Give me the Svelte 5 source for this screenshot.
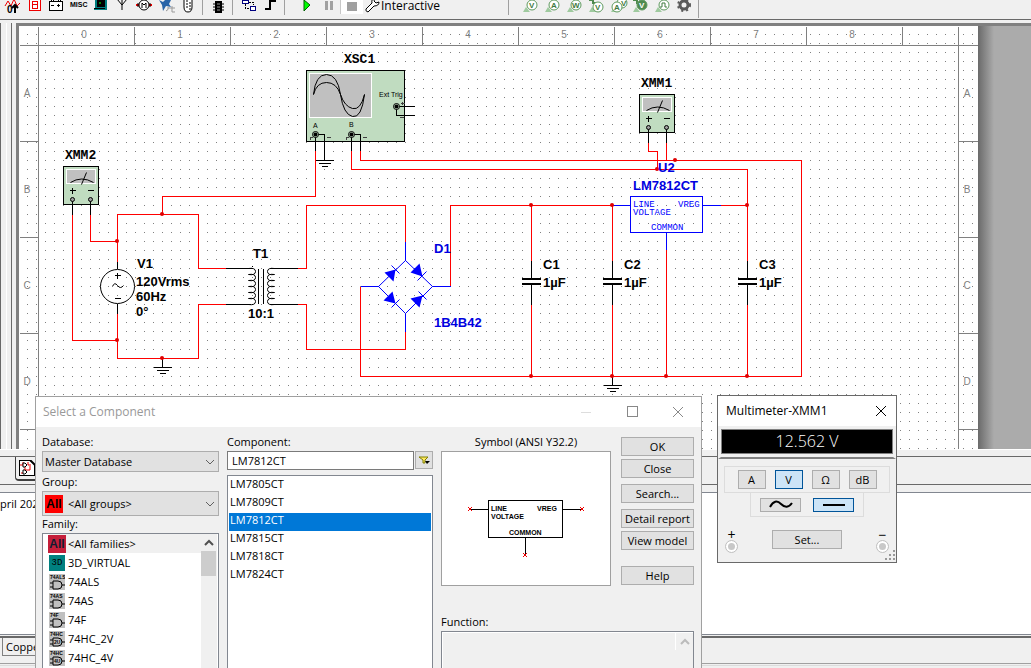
<script>
  /* Sheet data, in sheet coordinates */
  const columns = [0, 1, 2, 3, 4, 5, 6, 7, 8];
  const rows = ['A', 'B', 'C', 'D'];

  const redWires = [
    'M72 214V340H117', 'M90 214V241H117', 'M117 261V214H198V268H225',
    'M162 214V196H315V150', 'M117 313V358H198V304H225',
    'M297 268H306V205H405V241', 'M297 304H306V349H405V331',
    'M360 286V376H801V160H360V150', 'M450 286V205H612',
    'M351 150V169H747V260', 'M720 205H747', 'M666 249V376',
    'M648 142V151H657V169', 'M666 142V160',
    'M531 205V260M531 304V376', 'M612 205V260M612 304V376', 'M747 304V376'
  ];
  const junctions = [
    [117, 241], [162, 214], [117, 340], [162, 358], [531, 205], [612, 205], [747, 205],
    [531, 376], [612, 376], [666, 376], [747, 376], [675, 160], [657, 169]
  ];
  const grounds = [[162, 358, 9], [324, 151, 9], [612, 376, 9]];
  const capacitors = [
    { name: 'C1', x: 531 },
    { name: 'C2', x: 612 },
    { name: 'C3', x: 747 }
  ];
  const meters = [
    { name: 'XMM2', x: 63, y: 166 },
    { name: 'XMM1', x: 639, y: 94 }
  ];
  const coilSteps = [0, 1, 2, 3, 4, 5];

  const families = [
    { name: '<All families>', kind: 'all' },
    { name: '3D_VIRTUAL', kind: 'virtual' },
    { name: '74ALS', kind: 'gate', tag: '74ALS' },
    { name: '74AS', kind: 'gate', tag: '74AS' },
    { name: '74F', kind: 'gate', tag: '74F' },
    { name: '74HC_2V', kind: 'gate', tag: '74HC', volts: '2U' },
    { name: '74HC_4V', kind: 'gate', tag: '74HC', volts: '4U' }
  ];
  const components = ['LM7805CT', 'LM7809CT', 'LM7812CT', 'LM7815CT', 'LM7818CT', 'LM7824CT'];
  const modes = ['A', 'V', 'Ω', 'dB'];
  const probes = ['V', 'A', 'W', 'dV', 'AV', 'ref', 'digital'];

  let selected = $state('LM7812CT');
  let mode = $state('V');
  let coupling = $state('dc');
</script>

<main>
  <nav class="toolbar" aria-label="Components">
    <button aria-label="Source"><svg width="22" height="18" viewBox="0 0 22 18"><path d="M4 6l3-5 3 5 3-7 3 7 3-3" fill="none" stroke="#e00" /><text x="6" y="13" class="mini">0</text><path d="M14 5v8M11 8l3-3 3 3" stroke="#000" fill="none" stroke-width="2" /></svg></button>
    <button aria-label="Indicator"><svg width="22" height="18" viewBox="0 0 22 18" shape-rendering="crispEdges"><rect x="6" y="-4" width="11" height="14" fill="#fff" stroke="#e00" /><path d="M9 1h5v3H9zM9 4h5v4H9z" fill="none" stroke="#e00" /></svg></button>
    <button aria-label="Power"><svg width="22" height="18" viewBox="0 0 22 18" shape-rendering="crispEdges"><path d="M4 1h13v9H4zM6 1v-2h2v2M13 1v-2h2v2M6 5h3M12 5h3M13 4v3" fill="#fff" stroke="#000" /></svg></button>
    <button aria-label="Miscellaneous"><svg width="22" height="18" viewBox="0 0 22 18"><text x="3" y="7" class="misc">MISC</text></svg></button>
    <button aria-label="Advanced peripherals"><svg width="22" height="18" viewBox="0 0 22 18"><path d="M6 0h12v10H5V8h1z" fill="#008080" /><path d="M8 0h8v7H8zM5 8h11v1H5z" /><path d="M10 3h2" stroke="#0f0" /></svg></button>
    <button aria-label="RF"><svg width="22" height="18" viewBox="0 0 22 18"><path d="M6-1l5 6 5-6M11-1v11" fill="none" stroke="#000" /></svg></button>
    <button aria-label="Electromechanical"><svg width="22" height="18" viewBox="0 0 22 18"><path d="M3 5h16" stroke="#e00" stroke-width="2" /><circle cx="11" cy="5" r="5" fill="#fff" stroke="#000" /><path d="M9 8V3l2 2 2-2v5M5 3v4M17 3v4" fill="none" stroke="#000" /></svg></button>
    <button aria-label="NI components"><svg width="22" height="18" viewBox="0 0 22 18"><path d="M4 0l4 2 3-3 5 1-2 4 2 3-5-1-3 5-1-6z" fill="#2864a8" /><path d="M11 11q3-1 2-4M13 8h2M17 6v6h3M15 8h5" fill="none" stroke="#999" /></svg></button>
    <button aria-label="Connectors"><svg width="22" height="18" viewBox="0 0 22 18"><path d="M7-1h8v8q0 5-4 5t-4-5z" fill="#fff" stroke="#000" /><path d="M10 0v8M13 2v8" stroke="#000" stroke-dasharray="2 1" /></svg></button>
    <span class="sep"></span>
    <button aria-label="MCU"><svg width="22" height="18" viewBox="0 0 22 18"><path d="M8 1h7v12H8z" /><path d="M6 4h11M6 7h11M6 10h11" stroke="#000" /><path d="M10 4h3M10 7h3M10 10h3" stroke="#999" /></svg></button>
    <span class="sep"></span>
    <button aria-label="Hierarchical block"><svg width="22" height="18" viewBox="0 0 22 18" shape-rendering="crispEdges"><path d="M5 0h6v3H5zM13 6h5v4h-5z" fill="#fff" stroke="#000080" /><path d="M8 4v4h4M12 2h4v3" fill="none" stroke="#000" stroke-dasharray="2 1" /></svg></button>
    <button aria-label="Bus"><svg width="22" height="18" viewBox="0 0 22 18"><path d="M6 9h5V1h6" fill="none" stroke="#000" stroke-width="2" /></svg></button>
    <span class="sep"></span>
    <div class="run">
      <button aria-label="Run"><svg width="22" height="18" viewBox="0 0 22 18"><path d="M8 0l6 5-6 6z" fill="#0f0" stroke="#006000" /></svg></button>
      <button aria-label="Pause"><svg width="22" height="18" viewBox="0 0 22 18"><path d="M7 1h3v9H7zM12 1h3v9h-3z" fill="#a0a0a0" /></svg></button>
      <button class="pressed" aria-label="Stop"><svg width="22" height="18" viewBox="0 0 22 18"><path d="M6 2h10v9H6z" fill="#a0a0a0" /></svg></button>
      <button class="analysis"><svg width="18" height="18" viewBox="0 0 18 18"><path d="M3 9l6-6q-1-4 3-5l-1 3 2 2 3-1q0 4-5 4l-6 6q-3-1-2-3z" fill="#fff" stroke="#000" /></svg>Interactive</button>
    </div>
    <span class="sep"></span>
    <div class="probes">
      {#each probes as probe}
        <button aria-label="{probe} probe"><svg width="22" height="18" viewBox="0 0 22 18">
          <path d="M3 12l3-5 4 5z" fill="#9fca9f" />
          {#if probe === 'dV' || probe === 'ref'}<path d="M3 0h4v4M7 3h4" fill="none" stroke="#4f8a4f" stroke-width="2" />{/if}
          {#if probe === 'AV'}<circle cx="14" cy="3" r="5" fill="#fff" stroke="#5f9a5f" /><text x="13" y="6" class="probe">V</text>{/if}
          <circle cx={probe === 'AV' ? 9 : 12} cy={probe === 'AV' || probe === 'dV' ? 7 : 5} r="5" fill={probe === 'ref' ? '#4f8a4f' : '#fff'} stroke="#5f9a5f" />
          {#if probe === 'digital'}<path d="M8 7h2V3h3v4h2" fill="none" stroke="#3f7a3f" />
          {:else if probe === 'AV'}<text x="6" y="10" class="probe">A</text>
          {:else if probe === 'dV'}<text x="9" y="10" class="probe">V</text>
          {:else if probe === 'ref'}<text x="9" y="8" class="probe light">V</text>
          {:else}<text x={probe === 'W' ? 8 : 9} y="8" class="probe">{probe}</text>{/if}
        </svg></button>
      {/each}
      <button aria-label="Probe settings"><svg width="22" height="18" viewBox="0 0 22 18"><circle cx="10" cy="5" r="4" fill="none" stroke="#5a5a5a" stroke-width="3" /><circle cx="10" cy="5" r="6" fill="none" stroke="#5a5a5a" stroke-width="2" stroke-dasharray="2 3" /></svg></button>
    </div>
  </nav>

  <section class="workspace">
    <div class="dock"><i class="edge"></i></div>
    <div class="sheet">
      <svg class="schematic" width="959" height="423" viewBox="19 26 959 423">
        <defs>
          <pattern id="dots" x="27" y="34" width="9" height="9" patternUnits="userSpaceOnUse">
            <rect width="1" height="1" fill="#808080" />
          </pattern>
        </defs>
        <rect x="19" y="26" width="959" height="423" fill="#fff" />
        <rect x="19" y="26" width="959" height="423" fill="url(#dots)" />

        <g transform="translate(.5 .5)" fill="none" stroke="#808080" shape-rendering="crispEdges">
          <path d="M19 45H978M38 26V449M958 26V449" />
          {#each columns as column}<path d="M{134 + column * 96} 26V45" />{/each}
          {#each rows as row, i}<path d="M19 {141 + i * 96}H38M958 {141 + i * 96}H978" />{/each}
        </g>
        {#each columns as column}<text class="ruler" x={84 + column * 96} y="38">{column}</text>{/each}
        {#each rows as row, i}
          <text class="ruler" x="27" y={97 + i * 96}>{row}</text>
          <text class="ruler" x="967" y={97 + i * 96}>{row}</text>
        {/each}

        <!-- instruments -->
        <g transform="translate(.5 .5)">
          {#each meters as meter}
            <g transform="translate({meter.x} {meter.y})">
              <g shape-rendering="crispEdges">
                <rect width="35" height="38" fill="#c0dcc0" stroke="#000" />
                <rect x="3" y="3" width="29" height="14" fill="#c0c0c0" stroke="#fff" />
                <path d="M9 21V27M6 24H12M24 24H30M9 33V48M27 33V48" stroke="#000" />
              </g>
              <path d="M7 16Q18 9 30 16M18 18L23 6" fill="none" stroke="#000" />
              <circle cx="9" cy="33" r="2" fill="#a0a0a0" stroke="#000" />
              <circle cx="27" cy="33" r="2" fill="#a0a0a0" stroke="#000" />
            </g>
          {/each}

          <g shape-rendering="crispEdges">
            <rect x="306" y="70" width="98" height="71" fill="#c0dcc0" stroke="#000" />
            <rect x="309" y="73" width="62" height="44" fill="#c0c0c0" stroke="#fff" />
            <path d="M315 150V134H324V151M351 150V134H360V150M414 106H396V115H414" fill="none" stroke="#000" />
            <path d="M309 137H312M310 136V139M326 137H330M345 137H348M346 136V139M362 137H366M400 103H404M402 101V104M399 117H403" stroke="#404040" />
          </g>
          <path d="M313 94Q315 74 326 74T340 94T352 116T364 94" fill="none" stroke="#000" />
          <path d="M313 94Q316 82 326 82T340 94T352 108T364 94" fill="none" stroke="#000" />
          {#each [[315, 134], [351, 134], [396, 106]] as [x, y]}
            <circle cx={x} cy={y} r="3" fill="#c0dcc0" stroke="#000" />
            <circle cx={x} cy={y} r="2" />
          {/each}
        </g>
        <text class="port" x="379" y="97">Ext Trig</text>
        <text class="port" x="313" y="128">A</text>
        <text class="port" x="349" y="127">B</text>

        <!-- wiring -->
        <g transform="translate(.5 .5)" fill="none" shape-rendering="crispEdges">
          {#each redWires as wire}<path d={wire} stroke="#f00" />{/each}
          {#each grounds as [x, y, drop]}
            <path d="M{x} {y}V{y + drop}M{x - 9} {y + drop}H{x + 9}M{x - 6} {y + drop + 3}H{x + 6}M{x - 3} {y + drop + 6}H{x + 3}" stroke="#000" />
          {/each}
          <path d="M117 261V268M117 303V313M225 268H252M225 304H250M270 268H297M270 304H297M258 268V303M263 268V303M252 265V266" stroke="#000" />
          <path d="M114 275H120M117 272V278M114 298H120" stroke="#000" />
          <path d="M405 241V260M405 313V331M360 286H378M432 286H450M612 205H630M702 205H720M666 232V249" stroke="#00f" />
          <rect x="630" y="196" width="72" height="36" stroke="#00f" />
        </g>
        <g transform="translate(.5 .5)" fill="none">
          <circle cx="117" cy="286" r="17" stroke="#000" />
          <path d="M112 286Q114 281 117 285T123 285" stroke="#000" />
          {#each coilSteps as step}
            <path d="M248 {268 + step * 6}Q255 {267 + step * 6} 255 {271 + step * 6}T248 {274 + step * 6}" stroke="#000" />
            <path d="M274 {268 + step * 6}Q267 {267 + step * 6} 267 {271 + step * 6}T274 {274 + step * 6}" stroke="#000" />
          {/each}
          <path d="M405 260L432 286L405 313L378 286Z" stroke="#00f" />
          <path d="M384 272L393 281L395 269ZM410 272L419 263L422 276ZM383 300L392 291L395 303ZM410 298L419 307L422 295Z" fill="#00f" />
          <path d="M391 265L399 273M417 280L426 271M391 307L399 299M418 291L426 299" stroke="#00f" />
          {#each capacitors as cap}
            <path d="M{cap.x} 260V278M{cap.x} 284V304" stroke="#000" shape-rendering="crispEdges" />
          {/each}
        </g>
        {#each capacitors as cap}
          <rect x={cap.x - 9} y="278" width="19" height="2" />
          <rect x={cap.x - 9} y="283" width="19" height="2" />
          <text class="label" x={cap.x + 12} y="269">{cap.name}</text>
          <text class="label" x={cap.x + 12} y="287">1µF</text>
        {/each}
        <g fill="#e00000">
          {#each junctions as [x, y]}<circle cx={x} cy={y} r="2" />{/each}
        </g>

        <!-- labels -->
        <text class="tag" x="65" y="159">XMM2</text>
        <text class="tag" x="641" y="87">XMM1</text>
        <text class="tag" x="344" y="63">XSC1</text>
        <text class="label" x="137" y="268">V1</text>
        <text class="label" x="136" y="286">120Vrms</text>
        <text class="label" x="136" y="301">60Hz</text>
        <text class="label" x="136" y="316">0°</text>
        <text class="label" x="253" y="258">T1</text>
        <text class="label" x="248" y="318">10:1</text>
        <text class="label blue" x="434" y="253">D1</text>
        <text class="label blue" x="434" y="327">1B4B42</text>
        <text class="label blue" x="658" y="172">U2</text>
        <text class="label blue" x="633" y="190">LM7812CT</text>
        <text class="pin" x="633" y="207">LINE</text>
        <text class="pin" x="678" y="207">VREG</text>
        <text class="pin" x="633" y="215">VOLTAGE</text>
        <text class="pin" x="651" y="230">COMMON</text>
      </svg>
    </div>
    <div class="backdrop"></div>
  </section>

  <div class="tabs">
    <button class="doc-tab" aria-label="Design1"><svg width="16" height="16" viewBox="0 0 16 16"><path d="M0 0h11l5 5v11H0z" fill="#fff" stroke="#000" stroke-width="2" /><path d="M1 5h3V2M9 2v3h3M2 13h4V6M6 10h5V6" fill="none" stroke="#e00" /><path d="M4 3h2l2 2-2 2H4zM4 10h2l2 2-2 2H4z" fill="#fff" stroke="#000" /></svg></button>
  </div>
  <section class="results"><p>pril 2020</p></section>
  <div class="sheet-tabs"><button>Copper layers</button></div>
  <footer></footer>

  <section class="window picker" aria-label="Select a Component">
    <header>
      <h1>Select a Component</h1>
      <button aria-label="Minimize"><svg width="12" height="12"><path d="M1 6h10" stroke="#ddd" shape-rendering="crispEdges" /></svg></button>
      <button aria-label="Maximize"><svg width="12" height="12"><rect x="1" y="1" width="10" height="10" transform="translate(.5 -.5)" fill="none" stroke="#888" /></svg></button>
      <button aria-label="Close window"><svg width="12" height="12"><path d="M1 1l10 10M11 1L1 11" stroke="#888" /></svg></button>
    </header>
    <div class="picker-body">
      <div class="col">
        <label for="database">Database:</label>
        <div class="combo">
          <select id="database"><option>Master Database</option></select>
          <svg class="chevron" width="10" height="6"><path d="M1 1l4 4 4-4" /></svg>
        </div>
        <label for="group">Group:</label>
        <div class="combo tall">
          <select id="group"><option>&lt;All groups&gt;</option></select>
          <span class="all-icon">All</span>
          <svg class="chevron" width="10" height="6"><path d="M1 1l4 4 4-4" /></svg>
        </div>
        <span class="caption" id="family">Family:</span>
        <div class="families">
          <ul role="listbox" aria-labelledby="family">
            {#each families as family, i}
              <li role="option" aria-selected={i === 0} class:current={i === 0}>
                {#if family.kind === 'all'}
                  <span class="all-icon dim">All</span>
                {:else if family.kind === 'virtual'}
                  <span class="virtual-icon">3D</span>
                {:else}
                  <svg width="16" height="16" viewBox="0 0 16 16">
                    <rect width="16" height="16" fill="#c0c0c0" />
                    <text x="1" y="5" class="chip">{family.tag}</text>
                    <path d="M4 7h5q4 0 4 4t-4 4H4zM1 9h3M1 13h3M13 11h3" fill="none" stroke="#000" />
                    {#if family.volts}<text x="5" y="13" class="chip">{family.volts}</text>{/if}
                  </svg>
                {/if}
                {family.name}
              </li>
            {/each}
          </ul>
          <div class="scroll">
            <svg width="16" height="17"><path d="M4 11l4-4 4 4" fill="none" stroke="#505050" stroke-width="2" /></svg>
            <i></i>
          </div>
        </div>
      </div>

      <div class="col">
        <label for="component">Component:</label>
        <div class="search">
          <input id="component" type="text" bind:value={selected} />
          <button aria-label="Filter"><svg width="12" height="10"><path d="M1 2h9L7 5v3H5V5z" fill="#ffe860" stroke="#808000" /><path d="M7 6h5L9 9z" /></svg></button>
        </div>
        <ul class="components" role="listbox" aria-label="Component">
          {#each components as component}
            <li role="option" aria-selected={component === selected} class:selected={component === selected}>
              <button onclick={() => (selected = component)}>{component}</button>
            </li>
          {/each}
        </ul>
      </div>

      <div class="detail">
        <div class="col">
          <span class="caption centered">Symbol (ANSI Y32.2)</span>
          <div class="preview">
            <svg width="116" height="60" viewBox="0 0 116 60">
              <g transform="translate(.5 .5)" fill="none" stroke="#000" shape-rendering="crispEdges">
                <rect x="20" y="1" width="74" height="37" />
                <path d="M2 10H20M94 10H113M57 38V56" />
              </g>
              <path d="M0 8l4 4M4 8l-4 4M112 8l4 4M116 8l-4 4M55 54l4 4M59 54l-4 4" stroke="#e00" />
              <text x="23" y="12">LINE</text>
              <text x="69" y="12">VREG</text>
              <text x="23" y="20">VOLTAGE</text>
              <text x="41" y="36">COMMON</text>
            </svg>
          </div>
        </div>
        <div class="actions">
          <button>OK</button>
          <button>Close</button>
          <button class="spaced">Search...</button>
          <button class="spaced">Detail report</button>
          <button>View model</button>
          <button class="apart">Help</button>
        </div>
        <div class="col function">
          <span class="caption">Function:</span>
          <div class="function-box">
            <svg width="17" height="18"><path d="M5 12l4-4 4 4" fill="none" stroke="#bbb" stroke-width="2" /></svg>
          </div>
        </div>
      </div>
    </div>
  </section>

  <section class="window meter" aria-label="Multimeter-XMM1">
    <header>
      <h1>Multimeter-XMM1</h1>
      <button aria-label="Close multimeter"><svg width="12" height="12"><path d="M1 1l10 10M11 1L1 11" stroke="#000" /></svg></button>
    </header>
    <div class="readout"><output>12.562 V</output></div>
    <div class="modes">
      {#each modes as item}
        <button class:on={mode === item} onclick={() => (mode = item)}>{item}</button>
      {/each}
    </div>
    <div class="coupling">
      <button class:on={coupling === 'ac'} aria-label="AC" onclick={() => (coupling = 'ac')}><svg width="24" height="10"><path d="M1 7Q6-2 12 4T23 3" fill="none" stroke="#000" stroke-width="2" /></svg></button>
      <button class:on={coupling === 'dc'} aria-label="DC" onclick={() => (coupling = 'dc')}><svg width="24" height="10"><path d="M1 4h22v2H1z" /></svg></button>
    </div>
    <div class="terminals">
      <span class="terminal">+<i></i></span>
      <button>Set...</button>
      <span class="terminal">−<i></i></span>
    </div>
    <svg class="grip" width="12" height="12"><path d="M9 1h2M5 5h2M9 5h2M1 9h2M5 9h2M9 9h2" stroke="#999" stroke-width="2" /></svg>
  </section>
</main>

<style>
  :global(body) {
    margin: 0;
  }
  main {
    position: relative;
    display: flex;
    flex-direction: column;
    height: 100vh;
    overflow: hidden;
    background: #f0f0f0;
    color: #000;
    font: 11px/14px "Open Sans", "Noto Sans", sans-serif;
  }
  button, input, select {
    box-sizing: border-box;
    margin: 0;
    padding: 0;
    font: inherit;
    color: inherit;
  }
  svg {
    display: block;
    flex: none;
  }
  ul, h1, p {
    margin: 0;
    padding: 0;
    list-style: none;
    font-weight: normal;
  }

  .toolbar {
    display: flex;
    flex: none;
    height: 19px;
    overflow: hidden;
    border-bottom: 1px solid #696969;
    padding-left: 1px;
  }
  .toolbar button {
    display: flex;
    border: 0;
    background: none;
  }
  .toolbar .sep {
    width: 1px;
    height: 15px;
    margin: 0 4px 0 3px;
    background: #a0a0a0;
  }
  .run {
    display: flex;
    box-sizing: border-box;
    width: 216px;
    padding-left: 7px;
  }
  .run .pressed {
    height: 14px;
    background: #fff;
    border-left: 1px solid #c8c8c8;
  }
  .run .analysis {
    font-size: 12px;
    line-height: 12px;
  }
  .probes {
    display: flex;
    height: 18px;
    padding: 0 2px 0 7px;
    border-right: 1px solid #a0a0a0;
  }
  .mini {
    font: bold 10px "Liberation Sans", sans-serif;
  }
  .misc {
    font: bold 7px "Liberation Sans", sans-serif;
  }
  .probe {
    font: bold 8px "Liberation Sans", sans-serif;
    fill: #3f7a3f;
  }
  .probe.light {
    fill: #fff;
  }

  .workspace {
    display: flex;
    flex: none;
    margin-top: 3px;
    border-bottom: 1px solid #fff;
  }
  .dock {
    flex: none;
    box-sizing: border-box;
    width: 12px;
    margin-right: 4px;
    border-left: 1px solid #696969;
    border-right: 1px solid #696969;
  }
  .edge {
    display: block;
    width: 1px;
    height: 100%;
    margin-left: 5px;
    background: #fff;
  }
  .sheet {
    flex: none;
    border: solid #808080;
    border-width: 3px 0 0 3px;
  }
  .backdrop {
    flex: 1;
    border-top: 3px solid #808080;
    background: linear-gradient(90deg, #6a6a6a, #ababab 16px);
  }
  .schematic text {
    font-family: "Liberation Sans", Arial, sans-serif;
  }
  .schematic .ruler {
    font-size: 10px;
    fill: #808080;
    text-anchor: middle;
  }
  .schematic .label {
    font-size: 13px;
    font-weight: bold;
  }
  .schematic .blue {
    fill: #0000e0;
  }
  .schematic .tag {
    font: bold 13px "Liberation Mono", monospace;
  }
  .schematic .pin {
    font: 9px "Liberation Mono", monospace;
    fill: #00f;
  }
  .schematic .port {
    font-size: 7px;
  }

  .tabs {
    flex: none;
    box-sizing: border-box;
    height: 29px;
    margin-top: 6px;
    border: solid #696969;
    border-width: 1px 0;
    padding-left: 15px;
  }
  .doc-tab {
    width: 110px;
    height: 24px;
    border: solid #404040;
    border-width: 0 1px 2px;
    border-radius: 0 0 4px 4px;
    background: #f0f0f0;
    padding-left: 3px;
  }
  .results {
    flex: 1;
    margin-top: 7px;
    padding-top: 4px;
    border: solid #828790;
    border-width: 1px 0;
    background: #fff;
  }
  .sheet-tabs {
    flex: none;
    height: 28px;
    box-sizing: border-box;
    margin-top: 1px;
    border-top: 2px solid #696969;
    border-bottom: 1px solid #a0a0a0;
    padding-left: 2px;
  }
  .sheet-tabs button {
    height: 18px;
    border: solid #808080;
    border-width: 0 1px 1px;
    background: #f0f0f0;
    padding: 0 3px;
  }
  footer {
    flex: none;
    height: 2px;
    margin-top: 1px;
    border-top: 1px solid #dcdcdc;
  }

  /* windows */
  .window {
    position: absolute;
    box-sizing: border-box;
    background: #f0f0f0;
  }
  .window header {
    display: flex;
    align-items: center;
    height: 30px;
    background: #fff;
  }
  .window h1 {
    flex: 1;
    font-size: 12px;
    line-height: 16px;
  }
  .window header button {
    border: 0;
    background: none;
  }
  .picker {
    left: 35px;
    top: 396px;
    bottom: 0;
    width: 667px;
    display: flex;
    flex-direction: column;
    border: 1px solid #a0a0a0;
    border-bottom: 0;
  }
  .picker header {
    flex: none;
    gap: 34px;
    padding: 0 17px 0 7px;
    color: #999;
  }
  .picker-body {
    flex: 1;
    min-height: 0;
    display: grid;
    grid-template-columns: 177px 206px 1fr;
    column-gap: 8px;
    padding: 7px 7px 0 6px;
  }
  .col {
    display: flex;
    flex-direction: column;
    min-height: 0;
  }
  label, .caption {
    flex: none;
    height: 17px;
    line-height: 16px;
  }
  .centered {
    text-align: center;
  }
  .combo {
    position: relative;
    height: 21px;
    margin-bottom: 2px;
  }
  .combo.tall {
    height: 25px;
    margin-bottom: 0;
  }
  .combo select {
    width: 100%;
    height: 100%;
    appearance: none;
    border: 1px solid #adadad;
    border-radius: 0;
    background: #e1e1e1;
    padding-left: 2px;
  }
  .combo.tall select {
    padding-left: 25px;
  }
  .chevron {
    position: absolute;
    right: 4px;
    top: calc(50% - 3px);
    fill: none;
    stroke: #606060;
  }
  .all-icon {
    width: 18px;
    height: 18px;
    background: #f00;
    font: bold 12px/18px "Liberation Sans", sans-serif;
    text-align: center;
  }
  .combo .all-icon {
    position: absolute;
    left: 3px;
    top: 4px;
  }
  .all-icon.dim {
    background: #c41e3a;
    color: #101c30;
    margin: 0 -1px;
  }
  .virtual-icon {
    width: 16px;
    height: 16px;
    background: #008080;
    font: 9px/16px "Liberation Mono", monospace;
    text-align: center;
  }
  .families {
    display: flex;
    flex: 1;
    min-height: 0;
    overflow: hidden;
    border: 1px solid #828790;
    border-bottom: 0;
    background: #fff;
    padding: 0 1px 0 6px;
  }
  .families ul {
    flex: 1;
  }
  .families li {
    display: flex;
    align-items: center;
    gap: 3px;
    height: 19px;
    white-space: nowrap;
  }
  .families .current {
    background: #f0f0f0;
  }
  .chip {
    font: bold 5px "Liberation Sans", sans-serif;
  }
  .scroll {
    width: 16px;
    background: #f0f0f0;
  }
  .scroll i {
    display: block;
    height: 25px;
    margin: 0 1px 0 0;
    background: #cdcdcd;
  }
  .search {
    display: flex;
    gap: 1px;
    height: 19px;
    margin-bottom: 5px;
  }
  .search input {
    flex: 1;
    min-width: 0;
    border: 1px solid #7a7a7a;
    background: #fff;
    padding-left: 4px;
  }
  .search button {
    display: flex;
    align-items: center;
    justify-content: center;
    width: 18px;
    height: 18px;
    border: 1px solid #adadad;
    background: #e1e1e1;
  }
  .components {
    flex: 1;
    border: 1px solid #828790;
    border-bottom: 0;
    background: #fff;
    padding: 1px;
  }
  .components li {
    height: 18px;
  }
  .components button {
    display: block;
    width: 100%;
    padding-left: 1px;
    border: 0;
    background: none;
    text-align: left;
  }
  .components .selected {
    background: #0078d7;
    color: #fff;
  }
  .detail {
    display: grid;
    grid-template-columns: 1fr 73px;
    grid-template-rows: auto 1fr;
    column-gap: 10px;
  }
  .preview {
    display: flex;
    justify-content: center;
    align-items: center;
    box-sizing: border-box;
    height: 135px;
    border: 1px solid #a0a0a0;
    background: #fff;
    padding-top: 20px;
  }
  .preview text {
    font: bold 7px "Liberation Sans", sans-serif;
  }
  .actions {
    display: flex;
    flex-direction: column;
    gap: 3px;
    padding-top: 3px;
  }
  .actions button, .meter div button {
    height: 19px;
    border: 1px solid #adadad;
    background: #e1e1e1;
  }
  .actions .spaced {
    margin-top: 3px;
  }
  .actions .apart {
    margin-top: 13px;
  }
  .function {
    grid-column: 1 / 3;
    padding-top: 28px;
  }
  .function-box {
    display: flex;
    flex: 1;
    justify-content: flex-end;
    border: 1px solid #828790;
    border-bottom: 0;
    box-shadow: inset 1px 1px #fff;
  }
  .function-box svg {
    border-left: 1px solid #fff;
  }

  .meter {
    left: 717px;
    top: 395px;
    width: 180px;
    border: 1px solid #696969;
    display: flex;
    flex-direction: column;
    align-items: center;
  }
  .meter header {
    align-self: stretch;
    padding: 0 9px 0 8px;
  }
  .readout {
    align-self: stretch;
    border: 3px solid #f0f0f0;
    border-bottom: 2px solid #808080;
    padding-bottom: 3px;
    margin-bottom: 7px;
  }
  .readout output {
    display: block;
    height: 23px;
    border: 1px solid #808080;
    background: #000;
    color: #fff;
    font-size: 16px;
    font-weight: 300;
    line-height: 22px;
    text-align: center;
  }
  .modes, .coupling {
    display: flex;
    justify-content: center;
    box-sizing: border-box;
    border: 1px solid #dcdcdc;
  }
  .modes {
    gap: 9px;
    width: 166px;
    padding: 3px 0;
  }
  .modes button {
    width: 28px;
  }
  .coupling {
    gap: 12px;
    width: 114px;
    padding: 5px 0 4px;
    border-top: 0;
  }
  .meter .coupling button {
    display: flex;
    align-items: center;
    justify-content: center;
    width: 41px;
    height: 14px;
  }
  .meter div button.on {
    border-color: #005499;
    background: #cce4f7;
  }
  .terminals {
    align-self: stretch;
    display: flex;
    justify-content: space-between;
    padding: 11px 8px 10px;
  }
  .terminals button {
    width: 70px;
    margin-top: 2px;
  }
  .terminal {
    display: flex;
    flex-direction: column;
    align-items: center;
    line-height: 13px;
    font-size: 14px;
  }
  .terminal i {
    width: 7px;
    height: 7px;
    border: 2px solid #fff;
    border-radius: 50%;
    background: #c8c8c8;
    outline: 1px solid #c0c0c0;
  }
  .grip {
    position: absolute;
    right: 0;
    bottom: 0;
  }
</style>
